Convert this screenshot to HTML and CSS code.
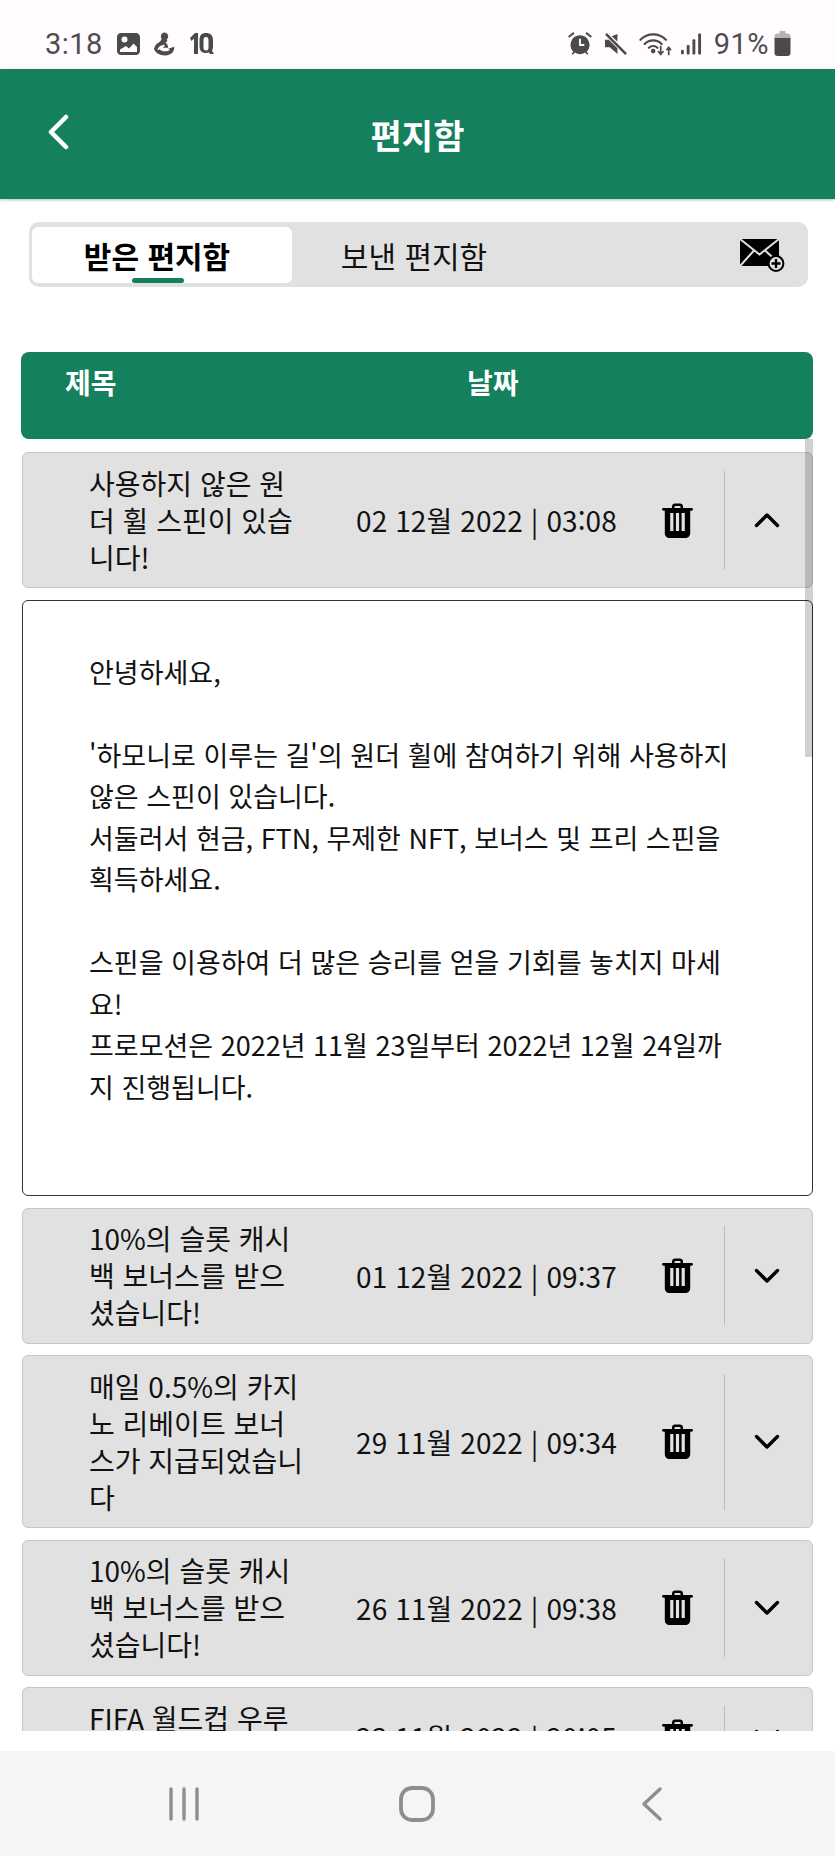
FILE: index.html
```html
<!DOCTYPE html>
<html lang="ko">
<head>
  <meta charset="UTF-8">
  <meta name="viewport" content="width=device-width, initial-scale=1.0">
  <title>편지함</title>
  <link rel="stylesheet" href="styles.css">
</head>
<body>
  <svg class="sprite" width="0" height="0">
    <symbol id="trash" viewBox="0 0 31 35">
      <path fill="#000" d="M10 5V3.500C10 1.600 11.400.5 13 .5h5c1.600 0 3 1.100 3 3V5h8.500c.8 0 1.500.6 1.500 1.300S30.300 7.700 29.500 7.700H28.200V30c0 2.800-1.800 5-4.500 5H7.300C4.600 35 2.800 32.800 2.800 30V7.700H1.500C.7 7.700 0 7.100 0 6.300S.7 5 1.500 5H10zM12.500 5h6V3.800c0-.5-.3-.8-.8-.8h-4.400c-.5 0-.8.3-.8.800V5z"/>
      <path fill="#e1e1e1" d="M8.200 10h3.200v18H8.200zM13.900 10h3.200v18h-3.200zM19.600 10h3.200v18h-3.200z"/>
    </symbol>
    <symbol id="chev-down" viewBox="0 0 26 16">
      <path fill="none" stroke="#000" stroke-width="3.400" stroke-linecap="round" stroke-linejoin="round" d="M2.500 2.500 13 13 23.500 2.500"/>
    </symbol>
    <symbol id="chev-up" viewBox="0 0 26 16">
      <path fill="none" stroke="#000" stroke-width="3.400" stroke-linecap="round" stroke-linejoin="round" d="M2.500 13.500 13 3 23.500 13.500"/>
    </symbol>
  </svg>

  <!-- status bar -->
  <div class="status-bar">
    <div class="status-left">
      <span class="status-text">3:18</span>
      <svg class="st-icon" width="23" height="22" viewBox="0 0 23 22">
        <path fill="#4a4a4a" fill-rule="evenodd" d="M4 0h15c2.200 0 4 1.800 4 4v14c0 2.200-1.800 4-4 4H4c-2.200 0-4-1.800-4-4V4c0-2.200 1.800-4 4-4zM3 16.500V19h17v-5l-3.500-3.500-4.500 5-3-2.500zM7.500 3.500a3 3 0 1 0 0 6 3 3 0 0 0 0-6z"/>
      </svg>
      <svg class="st-icon" width="21" height="24" viewBox="0 0 22 24">
        <path fill="#4a4a4a" d="M11 0a4 4 0 0 1 3 6.500c-.8.800-.6 1.600.2 2.200l-2.200 2c2 1.300 3 3 2.700 5.300H8.800c2-.5 2.600-2 2-3.500C6 13.500 4 16 3.500 18.500L6 17.500c1 2.500 8 3 11 .5l-2.500-.7L21 15c.8 4.500-2.500 9-9.500 9S.5 20 0 17c1-3.500 3.500-6 6.500-7.500C7 8 8 7.300 8 6.500A4 4 0 0 1 11 0z"/>
      </svg>
      <svg class="st-icon" width="25" height="23" viewBox="0 0 25 23">
        <path fill="#4a4a4a" fill-rule="evenodd" d="M1 6l5-5h3v21H5V6.500L2.500 9zM17 1c4.500 0 7 2.500 7 7v7c0 1.500-.3 2.800-1 3.800l2 3.200h-4l-1-1.500c-.9.300-1.900.5-3 .5-4.500 0-6.500-2.500-6.500-6.500V8c0-4.500 2-7 6.500-7zM17 5c-1.700 0-2.500 1-2.500 3v7.500c0 2 .8 3 2.500 3s2.500-1 2.500-3V8c0-2-.8-3-2.500-3z"/>
      </svg>
    </div>
    <div class="status-right">
      <svg class="st-icon" width="24" height="23" viewBox="0 0 25 24">
        <path fill="#4a4a4a" fill-rule="evenodd" d="M12.500 3.500a10 10 0 0 1 7 17l1.800 2.200-1.400 1-2-2.200a10 10 0 0 1-10.800 0l-2 2.200-1.400-1 1.800-2.200a10 10 0 0 1 7-17zM11.500 7v7.500H17v-2h-3.500V7zM5.500 0 0 4.500 1.300 6 6.800 1.500zM19.500 0 25 4.500 23.700 6 18.200 1.500z"/>
      </svg>
      <svg class="st-icon st-mute" width="24" height="24" viewBox="0 0 25 25">
        <path fill="#4a4a4a" d="M14 2v8L8 4.500zM1 8h4l9 9v6l-8-7H1z"/>
        <path stroke="#4a4a4a" stroke-width="2.600" d="M2 2l21 21"/>
      </svg>
      <svg class="st-icon st-wifi" width="34" height="24" viewBox="0 0 36 25" fill="none" stroke="#4a4a4a" stroke-width="2.300" stroke-linecap="round">
        <path d="M1.500 8C9 .5 21 .5 28.500 8"/>
        <path d="M6 12.500c5-5 13-5 18 0"/>
        <path d="M10.500 16.500c2.500-2.500 6.500-2.500 9 0"/>
        <circle cx="15" cy="20" r="1.300" fill="#4a4a4a"/>
        <path d="M23 15v8M20.500 20.500 23 23.500l2.500-3M31.500 23.500v-7M29.500 18.500l2-2.500 2 2.500" stroke-width="1.800"/>
      </svg>
      <svg class="st-icon st-signal" width="21" height="22" viewBox="0 0 22 22" fill="#4a4a4a">
        <rect x="0" y="17" width="3" height="5" rx="1.500"/>
        <rect x="6" y="12" width="3" height="10" rx="1"/>
        <rect x="12" y="6" width="3" height="16" rx="1"/>
        <rect x="18" y="0" width="3" height="22" rx="1"/>
      </svg>
      <span class="status-text pct">91%</span>
      <svg class="st-icon st-batt" width="17" height="25" viewBox="0 0 17 25">
        <path fill="#b5b3b5" d="M5.500 0h6v2.500h2c1.700 0 3 1.300 3 3V7H.500V5.500c0-1.700 1.300-3 3-3h2z"/>
        <path fill="#4a4a4a" d="M.5 7h16v15c0 1.700-1.300 3-3 3h-10c-1.700 0-3-1.300-3-3z"/>
      </svg>
    </div>
  </div>

  <!-- top bar -->
  <div class="top-bar">
    <svg class="back" width="22" height="36" viewBox="0 0 22 36">
      <path fill="none" stroke="#fff" stroke-width="4.500" stroke-linecap="round" stroke-linejoin="round" d="M19 3 4 18l15 15"/>
    </svg>
    <div class="top-title">편지함</div>
  </div>

  <div class="page">
    <div class="tabs">
      <div class="tab active">받은 편지함</div>
      <div class="tab">보낸 편지함</div>
      <svg class="compose" width="45" height="33" viewBox="0 0 45 33">
        <rect x="0" y="0" width="39" height="27" fill="#000"/>
        <path fill="none" stroke="#e1e1e1" stroke-width="2" d="M0 0 19.500 15.500 39 0M0 27 14 11.500M25 11.500 39 24"/>
        <circle cx="36" cy="24.500" r="7.400" fill="#e1e1e1" stroke="#000" stroke-width="2"/>
        <path stroke="#000" stroke-width="2.400" d="M36 20v9M31.500 24.500h9"/>
      </svg>
    </div>

    <div class="list-head">
      <div class="head-title">제목</div>
      <div class="head-date">날짜</div>
    </div>

    <div class="list-wrap">
      <div class="list">
        <div class="row">
          <div class="row-title">사용하지 않은 원더 휠 스핀이 있습니다!</div>
          <div class="row-date">02 12월 2022 | 03:08</div>
          <svg class="trash"><use href="#trash"/></svg>
          <div class="row-toggle"><svg class="chev"><use href="#chev-up"/></svg></div>
        </div>

        <div class="panel">
          <p>안녕하세요,</p>
          <br>
          <p>'하모니로 이루는 길'의 원더 휠에 참여하기 위해 사용하지 않은 스핀이 있습니다.</p>
          <p>서둘러서 현금, FTN, 무제한 NFT, 보너스 및 프리 스핀을 획득하세요.</p>
          <br>
          <p>스핀을 이용하여 더 많은 승리를 얻을 기회를 놓치지 마세요!</p>
          <p>프로모션은 2022년 11월 23일부터 2022년 12월 24일까지 진행됩니다.</p>
        </div>

        <div class="row">
          <div class="row-title">10%의 슬롯 캐시백 보너스를 받으셨습니다!</div>
          <div class="row-date">01 12월 2022 | 09:37</div>
          <svg class="trash"><use href="#trash"/></svg>
          <div class="row-toggle"><svg class="chev"><use href="#chev-down"/></svg></div>
        </div>
        <div class="row">
          <div class="row-title">매일 0.5%의 카지노 리베이트 보너스가 지급되었습니다</div>
          <div class="row-date">29 11월 2022 | 09:34</div>
          <svg class="trash"><use href="#trash"/></svg>
          <div class="row-toggle"><svg class="chev"><use href="#chev-down"/></svg></div>
        </div>
        <div class="row">
          <div class="row-title">10%의 슬롯 캐시백 보너스를 받으셨습니다!</div>
          <div class="row-date">26 11월 2022 | 09:38</div>
          <svg class="trash"><use href="#trash"/></svg>
          <div class="row-toggle"><svg class="chev"><use href="#chev-down"/></svg></div>
        </div>
        <div class="row">
          <div class="row-title">FIFA 월드컵 우루과이전 보너스</div>
          <div class="row-date">23 11월 2022 | 20:05</div>
          <svg class="trash"><use href="#trash"/></svg>
          <div class="row-toggle"><svg class="chev"><use href="#chev-down"/></svg></div>
        </div>
      </div>
      <div class="scrollbar"></div>
    </div>
  </div>

  <!-- android nav -->
  <div class="nav-bar">
    <svg width="32" height="34" viewBox="0 0 32 34" stroke="#8e8e8e" stroke-width="3.400" stroke-linecap="round">
      <path d="M3 2v30M16 2v30M29 2v30"/>
    </svg>
    <svg class="nav-home" width="36" height="36" viewBox="0 0 36 36" fill="none" stroke="#8e8e8e" stroke-width="3.800">
      <rect x="2" y="2" width="32" height="32" rx="11"/>
    </svg>
    <svg class="nav-back" width="22" height="34" viewBox="0 0 22 34" fill="none" stroke="#8e8e8e" stroke-width="3.400" stroke-linecap="round" stroke-linejoin="round">
      <path d="M19 2 3 17l16 15"/>
    </svg>
  </div>
</body>
</html>
```

FILE: styles.css
```css
html, body {
  margin: 0;
  padding: 0;
  height: 100%;
}
body {
  width: 835px;
  height: 1856px;
  display: flex;
  flex-direction: column;
  overflow: hidden;
  background: #fff;
  color: #111;
  font-family: "Noto Sans CJK KR", "Noto Sans", sans-serif;
}
.sprite { position: absolute; }

/* status bar */
.status-bar {
  height: 69px;
  box-sizing: border-box;
  padding: 18px 44px 0 45px;
  background: #fffbff;
  display: flex;
  justify-content: space-between;
  align-items: center;
  flex-shrink: 0;
}
.status-left, .status-right {
  display: flex;
  align-items: center;
}
.status-text {
  font-family: Roboto, sans-serif;
  font-size: 29px;
  color: #4d4d4d;
  letter-spacing: .5px;
}
.status-left .st-icon { margin-left: 14px; }
.status-right .st-mute { margin-left: 12px; }
.status-right .st-wifi { margin-left: 11px; }
.status-right .st-signal { margin-left: 8px; }
.status-right .pct { margin-left: 12px; }
.status-right .st-batt { margin-left: 5px; }

/* top bar */
.top-bar {
  height: 130px;
  background: #15805d;
  box-shadow: 0 1px 3px rgba(0, 0, 0, .25);
  display: flex;
  align-items: center;
  justify-content: center;
  position: relative;
  flex-shrink: 0;
}
.top-title {
  color: #fff;
  font-size: 34px;
  font-weight: 700;
  margin-top: 1px;
}
.back {
  position: absolute;
  left: 47px;
  top: 45px;
}

/* tabs */
.page {
  flex: 1;
  min-height: 0;
  display: flex;
  flex-direction: column;
  padding: 0 22px;
}
.tabs {
  margin: 23px 5px 0 7px;
  height: 65px;
  box-sizing: border-box;
  padding: 5px 3px 4px;
  background: #e1e1e1;
  border-radius: 10px;
  display: flex;
  align-items: stretch;
  flex-shrink: 0;
  position: relative;
}
.tab {
  width: 260px;
  box-sizing: border-box;
  padding-right: 16px;
  display: flex;
  align-items: center;
  justify-content: center;
  font-size: 30px;
  border-radius: 6px;
  position: relative;
}
.tab.active {
  padding-right: 10px;
  background: #fff;
  font-weight: 700;
  color: #000;
}
.tab.active::after {
  content: "";
  position: absolute;
  left: 100px;
  bottom: 0;
  width: 52px;
  height: 5px;
  border-radius: 3px;
  background: #15805d;
}
.compose {
  margin-left: auto;
  margin-right: 20px;
  align-self: center;
}

/* list header */
.list-head {
  margin-top: 65px;
  margin-left: -1px;
  height: 87px;
  background: #15805d;
  border-radius: 8px;
  color: #fff;
  font-size: 28px;
  font-weight: 700;
  display: flex;
  padding: 10px 0 0 44px;
  box-sizing: border-box;
  flex-shrink: 0;
}
.head-title { width: 402px; line-height: 40px; }
.head-date { line-height: 40px; }

/* rows */
.list-wrap {
  flex: 1;
  min-height: 0;
  position: relative;
  overflow: hidden;
}
.list {
  display: flex;
  flex-direction: column;
  gap: 11.500px;
  padding-top: 13px;
}
.row {
  background: #e1e1e1;
  border: 1px solid #c6c6c6;
  border-radius: 6px;
  padding: 11.500px 0 11.500px 66px;
  display: flex;
  align-items: center;
  flex-shrink: 0;
}
.row-title {
  width: 218px;
  margin-right: 49px;
  font-size: 28px;
  line-height: 37px;
  word-break: break-all;
  flex-shrink: 0;
}
.row-date {
  width: 306px;
  font-size: 28px;
  letter-spacing: .1px;
  white-space: nowrap;
  flex-shrink: 0;
}
.trash {
  width: 31px;
  height: 35px;
  flex-shrink: 0;
}
.row-toggle {
  margin-left: 31px;
  align-self: stretch;
  border-left: 1px solid #bdbdbd;
  display: flex;
  align-items: center;
  justify-content: center;
  width: 83px;
  margin-top: 6px;
  margin-bottom: 6px;
}
.chev {
  width: 26px;
  height: 16px;
}

/* open message */
.panel {
  background: #fff;
  border: 1.500px solid #333;
  border-radius: 6px;
  padding: 50px 68px 88px 66px;
  font-size: 27px;
  line-height: 41.500px;
  word-break: break-all;
  flex-shrink: 0;
}
.panel p { margin: 0; }

.scrollbar {
  position: absolute;
  right: 0;
  top: 0;
  width: 8px;
  height: 318px;
  background: rgba(0, 0, 0, .18);
}

/* android nav */
.nav-bar {
  margin-top: 20px;
  height: 105px;
  background: #f5f5f5;
  flex-shrink: 0;
  display: flex;
  align-items: center;
  padding-left: 168px;
  box-sizing: border-box;
}
.nav-home { margin-left: 199px; }
.nav-back { margin-left: 206px; }
```
